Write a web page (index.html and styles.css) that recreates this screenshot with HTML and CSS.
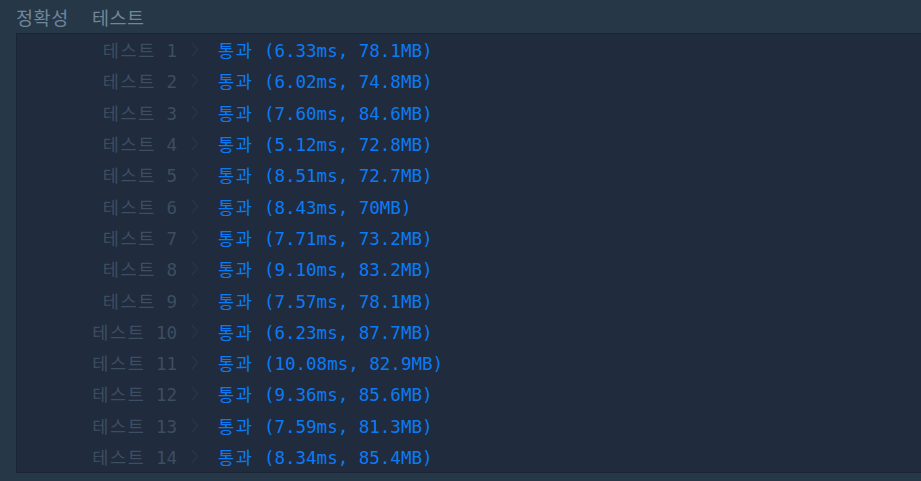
FILE: index.html
```html
<!DOCTYPE html>
<html lang="ko">
<head>
  <meta charset="UTF-8">
  <meta name="viewport" content="width=device-width, initial-scale=1.0">
  <title>채점 결과</title>
  <link rel="stylesheet" href="styles.css">
</head>
<body>
  <div class="tabs">
    <span class="tab">정확성</span>
    <span class="tab">테스트</span>
  </div>

  <div class="result-panel">
    <div class="row"><span class="label"><span class="ko">테스트</span> 1</span><svg class="chevron" viewBox="0 0 7 15"><path d="M0.5 0.5 L6.5 7.5 L0.5 14.5"/></svg><span class="pass"><span class="ko">통과</span> (6.33ms, 78.1MB)</span></div>
    <div class="row"><span class="label"><span class="ko">테스트</span> 2</span><svg class="chevron" viewBox="0 0 7 15"><path d="M0.5 0.5 L6.5 7.5 L0.5 14.5"/></svg><span class="pass"><span class="ko">통과</span> (6.02ms, 74.8MB)</span></div>
    <div class="row"><span class="label"><span class="ko">테스트</span> 3</span><svg class="chevron" viewBox="0 0 7 15"><path d="M0.5 0.5 L6.5 7.5 L0.5 14.5"/></svg><span class="pass"><span class="ko">통과</span> (7.60ms, 84.6MB)</span></div>
    <div class="row"><span class="label"><span class="ko">테스트</span> 4</span><svg class="chevron" viewBox="0 0 7 15"><path d="M0.5 0.5 L6.5 7.5 L0.5 14.5"/></svg><span class="pass"><span class="ko">통과</span> (5.12ms, 72.8MB)</span></div>
    <div class="row"><span class="label"><span class="ko">테스트</span> 5</span><svg class="chevron" viewBox="0 0 7 15"><path d="M0.5 0.5 L6.5 7.5 L0.5 14.5"/></svg><span class="pass"><span class="ko">통과</span> (8.51ms, 72.7MB)</span></div>
    <div class="row"><span class="label"><span class="ko">테스트</span> 6</span><svg class="chevron" viewBox="0 0 7 15"><path d="M0.5 0.5 L6.5 7.5 L0.5 14.5"/></svg><span class="pass"><span class="ko">통과</span> (8.43ms, 70MB)</span></div>
    <div class="row"><span class="label"><span class="ko">테스트</span> 7</span><svg class="chevron" viewBox="0 0 7 15"><path d="M0.5 0.5 L6.5 7.5 L0.5 14.5"/></svg><span class="pass"><span class="ko">통과</span> (7.71ms, 73.2MB)</span></div>
    <div class="row"><span class="label"><span class="ko">테스트</span> 8</span><svg class="chevron" viewBox="0 0 7 15"><path d="M0.5 0.5 L6.5 7.5 L0.5 14.5"/></svg><span class="pass"><span class="ko">통과</span> (9.10ms, 83.2MB)</span></div>
    <div class="row"><span class="label"><span class="ko">테스트</span> 9</span><svg class="chevron" viewBox="0 0 7 15"><path d="M0.5 0.5 L6.5 7.5 L0.5 14.5"/></svg><span class="pass"><span class="ko">통과</span> (7.57ms, 78.1MB)</span></div>
    <div class="row"><span class="label"><span class="ko">테스트</span> 10</span><svg class="chevron" viewBox="0 0 7 15"><path d="M0.5 0.5 L6.5 7.5 L0.5 14.5"/></svg><span class="pass"><span class="ko">통과</span> (6.23ms, 87.7MB)</span></div>
    <div class="row"><span class="label"><span class="ko">테스트</span> 11</span><svg class="chevron" viewBox="0 0 7 15"><path d="M0.5 0.5 L6.5 7.5 L0.5 14.5"/></svg><span class="pass"><span class="ko">통과</span> (10.08ms, 82.9MB)</span></div>
    <div class="row"><span class="label"><span class="ko">테스트</span> 12</span><svg class="chevron" viewBox="0 0 7 15"><path d="M0.5 0.5 L6.5 7.5 L0.5 14.5"/></svg><span class="pass"><span class="ko">통과</span> (9.36ms, 85.6MB)</span></div>
    <div class="row"><span class="label"><span class="ko">테스트</span> 13</span><svg class="chevron" viewBox="0 0 7 15"><path d="M0.5 0.5 L6.5 7.5 L0.5 14.5"/></svg><span class="pass"><span class="ko">통과</span> (7.59ms, 81.3MB)</span></div>
    <div class="row"><span class="label"><span class="ko">테스트</span> 14</span><svg class="chevron" viewBox="0 0 7 15"><path d="M0.5 0.5 L6.5 7.5 L0.5 14.5"/></svg><span class="pass"><span class="ko">통과</span> (8.34ms, 85.4MB)</span></div>
  </div>
</body>
</html>
```

FILE: styles.css
```css
body {
  margin: 0;
  background-color: #263747;
  font-family: "DejaVu Sans Mono", "Noto Sans CJK KR", monospace;
  overflow: hidden;
}

.tabs {
  height: 33px;
  display: flex;
  align-items: center;
  gap: 23px;
  padding-left: 16px;
  font-family: "Noto Sans CJK KR", sans-serif;
  font-size: 18.5px;
  letter-spacing: 0.6px;
  color: #70869a;
}

.result-panel {
  margin-left: 16px;
  width: 940px;
  background-color: #202b3d;
  border: 1px solid #1b2434;
  border-right: none;
}

.row {
  display: flex;
  align-items: center;
  height: 31.3px;
  padding-bottom: 1px;
  margin-bottom: -1px;
  font-size: 17.5px;
  white-space: pre;
}

.ko {
  letter-spacing: 1.6px;
}

.label {
  width: 160px;
  text-align: right;
  color: #3d4e62;
}

.chevron {
  width: 7px;
  height: 15px;
  margin-left: 14px;
  margin-right: 20px;
  fill: none;
  stroke: #2f3d4f;
  stroke-width: 1;
}

.pass {
  color: #0b7bf5;
}
```
